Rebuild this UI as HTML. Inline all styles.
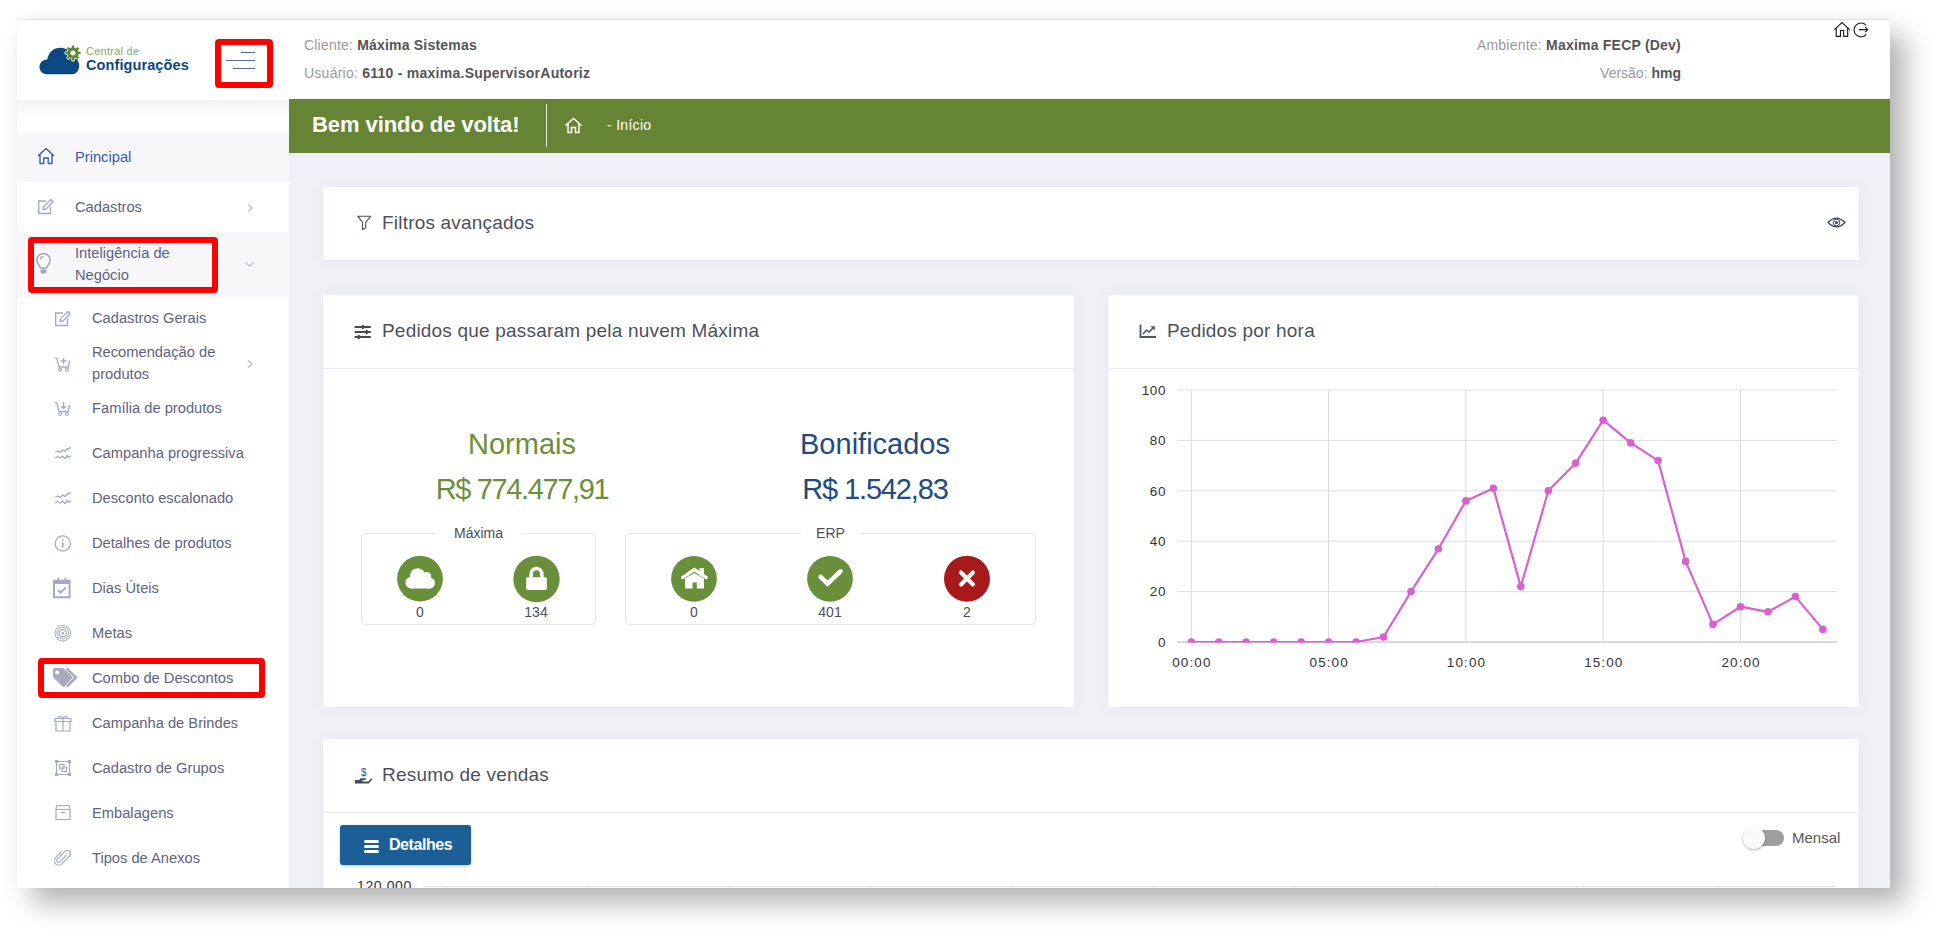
<!DOCTYPE html>
<html><head><meta charset="utf-8">
<style>
*{margin:0;padding:0;box-sizing:border-box}
html,body{width:1938px;height:936px;overflow:hidden;background:#fff;font-family:"Liberation Sans",sans-serif}
.a{position:absolute;white-space:nowrap}
#win{position:absolute;left:17px;top:20px;width:1873px;height:868px;background:#f0f1f7;box-shadow:15px 15px 26px rgba(0,0,0,.3),0 -1px 1px rgba(0,0,0,.06),0 -6px 14px rgba(0,0,0,.025)}
#pg{position:absolute;left:0;top:0;width:1938px;height:936px;clip-path:inset(20px 48px 48px 17px)}
.hdr{position:absolute;left:17px;top:20px;width:1873px;height:79px;background:#fff}
.side{position:absolute;left:17px;top:99px;width:272px;height:789px;background:#fff}
.green{position:absolute;left:289px;top:99px;width:1601px;height:54px;background:#658535}
.card{position:absolute;background:#fff;box-shadow:0 0 14px rgba(60,70,110,.055)}
.lbl{color:#9a9a9a}
.val{color:#555;font-weight:bold}
.si{position:absolute;white-space:nowrap;color:#5f6380;font-size:14.7px;line-height:22px}
.ic{position:absolute}
</style></head><body>
<div id="win"></div>
<div id="pg">
  <div class="hdr"></div>
  <div class="side"></div>
  <div class="green"></div>

  <!-- logo -->
  <svg class="ic" style="left:38px;top:46px" width="44" height="30" viewBox="0 0 44 30">
    <path d="M9.5 28.3 C4.5 28.3 1.5 25 1.5 21 C1.5 16.5 5 13.5 9.2 13.5 C10.5 6.5 15.5 1.8 22.5 1.8 C28.5 1.8 33 5.5 34.5 10.5 C38.5 11.5 41.2 15.2 41.2 20 C41.2 24.8 37.8 28.3 33.5 28.3 Z" fill="#0b4780"/>
  </svg>
  <svg class="ic" style="left:64px;top:44px" width="18" height="18" viewBox="0 0 18 18">
    <g fill="#fff"><circle cx="9" cy="9" r="6.4"/>
    <rect x="7.2" y="0.6" width="3.6" height="16.8" rx="1"/>
    <rect x="7.2" y="0.6" width="3.6" height="16.8" rx="1" transform="rotate(45 9 9)"/>
    <rect x="7.2" y="0.6" width="3.6" height="16.8" rx="1" transform="rotate(90 9 9)"/>
    <rect x="7.2" y="0.6" width="3.6" height="16.8" rx="1" transform="rotate(135 9 9)"/></g>
    <g fill="#5f8a35"><circle cx="9" cy="9" r="5.6"/>
    <rect x="7.75" y="1.4" width="2.5" height="15.2" rx="0.6"/>
    <rect x="7.75" y="1.4" width="2.5" height="15.2" rx="0.6" transform="rotate(45 9 9)"/>
    <rect x="7.75" y="1.4" width="2.5" height="15.2" rx="0.6" transform="rotate(90 9 9)"/>
    <rect x="7.75" y="1.4" width="2.5" height="15.2" rx="0.6" transform="rotate(135 9 9)"/></g>
    <circle cx="9" cy="9" r="2.5" fill="#fff"/>
  </svg>
  <div class="a" style="left:86px;top:45px;font-size:11px;color:#87a766;letter-spacing:0.25px">Central de</div>
  <div class="a" style="left:86px;top:57px;font-size:14.5px;font-weight:bold;color:#0b4780;letter-spacing:0.1px">Configurações</div>

  <!-- hamburger w/ red box -->
  <div class="a" style="left:214.6px;top:39.3px;width:58.8px;height:49.2px;border:6px solid #ff0000;border-radius:4px"></div>
  <div class="a" style="left:241px;top:52px;width:14px;height:1.2px;background:#5b6e8c"></div>
  <div class="a" style="left:226px;top:60px;width:29px;height:1.2px;background:#5b6e8c"></div>
  <div class="a" style="left:233px;top:68px;width:22px;height:1.2px;background:#5b6e8c"></div>

  <!-- header info -->
  <div class="a" style="left:304px;top:36px;font-size:14px;line-height:18px;letter-spacing:0.2px"><span class="lbl">Cliente:</span> <span class="val">Máxima Sistemas</span></div>
  <div class="a" style="left:304px;top:64px;font-size:14px;line-height:18px;letter-spacing:0.25px"><span class="lbl">Usuário:</span> <span class="val">6110 - maxima.SupervisorAutoriz</span></div>
  <div class="a" style="right:257px;top:36px;font-size:14px;line-height:18px;text-align:right;letter-spacing:0.22px"><span class="lbl">Ambiente:</span> <span class="val">Maxima FECP (Dev)</span></div>
  <div class="a" style="right:257px;top:64px;font-size:14px;line-height:18px;text-align:right"><span class="lbl">Versão:</span> <span class="val">hmg</span></div>
  <svg class="ic" style="left:1833px;top:22px" width="36" height="16" viewBox="0 0 36 16">
    <path d="M1.3 7.6 L9 0.6 L16.7 7.6 M3.2 6.2 V14.3 H7.5 V8.5 H10.6 V14.3 H14.7 V6.2" fill="none" stroke="#1e1e1e" stroke-width="1.15"/>
    <path d="M33.3 3.5 A6.9 6.9 0 1 0 33.3 12.3" fill="none" stroke="#1e1e1e" stroke-width="1.15"/>
    <path d="M25.9 7.6 H34.6 M32.3 5.2 L34.7 7.6 L32.3 10" fill="none" stroke="#1e1e1e" stroke-width="1.15"/>
  </svg>

  <!-- green bar -->
  <div class="a" style="left:312px;top:110px;font-size:22px;line-height:30px;color:#fff;font-weight:bold;letter-spacing:-0.08px">Bem vindo de volta!</div>
  <div class="a" style="left:546px;top:104px;width:1px;height:43px;background:#e8eedd"></div>
  <svg class="ic" style="left:564px;top:117px" width="19" height="17" viewBox="0 0 19 17">
    <path d="M1.5 8.5 L9.5 1.5 L17.5 8.5 M4 6.8 V15.5 H7.5 V10.5 H11.5 V15.5 H15 V6.8" fill="none" stroke="#fff" stroke-width="1.5"/>
  </svg>
  <div class="a" style="left:607px;top:116px;font-size:14px;line-height:18px;color:#fff;letter-spacing:0.3px">- Início</div>

  <!-- sidebar -->
  <div class="a" style="left:17px;top:100px;width:272px;height:20px;background:linear-gradient(#f3f3f3,#fff)"></div>
  <div class="a" style="left:17px;top:133px;width:272px;height:49px;background:#f7f7fa"></div>
  <div class="a" style="left:17px;top:232px;width:272px;height:65px;background:#f7f7fa"></div>

  <!-- sidebar items -->
  <svg class="ic" style="left:36px;top:147px" width="20" height="18" viewBox="0 0 20 18">
    <path d="M2 9 L10 1.5 L18 9 M4 7.3 V16.5 H7.8 V11 H12.2 V16.5 H16 V7.3" fill="none" stroke="#3a5ab6" stroke-width="1.4" stroke-linejoin="round"/>
  </svg>
  <div class="si" style="left:75px;top:146px;color:#3a5ab6">Principal</div>

  <svg class="ic" style="left:37px;top:198px" width="18" height="17" viewBox="0 0 18 17">
    <path d="M9 3 H1.7 V15.5 H13.5 V8.5" fill="none" stroke="#a6aac0" stroke-width="1.4"/>
    <path d="M6 11.5 L6.6 8.6 L13.8 1.4 L16.2 3.8 L9 11 Z" fill="none" stroke="#a6aac0" stroke-width="1.3" stroke-linejoin="round"/>
  </svg>
  <div class="si" style="left:75px;top:196px">Cadastros</div>
  <svg class="ic" style="left:246px;top:203px" width="8" height="10" viewBox="0 0 8 10"><path d="M2 1.5 L6 5 L2 8.5" fill="none" stroke="#b5b8c8" stroke-width="1.1"/></svg>

  <svg class="ic" style="left:35px;top:253px" width="17" height="22" viewBox="0 0 17 22">
    <path d="M5.3 15 C5 12.5 1.8 10.8 1.8 7.3 A6.7 6.7 0 0 1 15.2 7.3 C15.2 10.8 12 12.5 11.7 15 Z" fill="none" stroke="#a1a5bb" stroke-width="1.5" stroke-linejoin="round"/>
    <path d="M5.4 6.5 A3.2 3.2 0 0 1 8.5 3.6" fill="none" stroke="#a1a5bb" stroke-width="1.2"/>
    <path d="M5.5 16.6 H11.5 V18.5 Q11.5 20.5 9.5 20.5 H7.5 Q5.5 20.5 5.5 18.5 Z" fill="#a1a5bb"/>
  </svg>
  <div class="si" style="left:75px;top:242px">Inteligência de</div>
  <div class="si" style="left:75px;top:264px">Negócio</div>
  <svg class="ic" style="left:244px;top:260px" width="11" height="8" viewBox="0 0 11 8"><path d="M1.5 2.5 L5.5 6 L9.5 2.5" fill="none" stroke="#b5b8c8" stroke-width="1.1"/></svg>

  <svg class="ic" style="left:54px;top:310px" width="18" height="17" viewBox="0 0 18 17">
    <path d="M9 3 H1.7 V15.5 H13.5 V8.5" fill="none" stroke="#a6aac0" stroke-width="1.4"/>
    <path d="M6 11.5 L6.6 8.6 L13.8 1.4 L16.2 3.8 L9 11 Z" fill="none" stroke="#a6aac0" stroke-width="1.3" stroke-linejoin="round"/>
  </svg>
  <div class="si" style="left:92px;top:307px">Cadastros Gerais</div>

  <svg class="ic" style="left:54px;top:357px" width="17" height="15" viewBox="0 0 17 15">
    <path d="M0.8 1.2 H2.8 L5 10 H14.2 L15.6 3.5" fill="none" stroke="#a6aac0" stroke-width="1.3" stroke-linejoin="round"/>
    <circle cx="6.2" cy="12.6" r="1.5" fill="none" stroke="#a6aac0" stroke-width="1.2"/>
    <circle cx="13" cy="12.6" r="1.5" fill="none" stroke="#a6aac0" stroke-width="1.2"/>
    <path d="M9.6 1 V7 M6.6 4 H12.6" fill="none" stroke="#a6aac0" stroke-width="1.3"/>
  </svg>
  <div class="si" style="left:92px;top:341px">Recomendação de</div>
  <div class="si" style="left:92px;top:363px">produtos</div>
  <svg class="ic" style="left:246px;top:359px" width="8" height="10" viewBox="0 0 8 10"><path d="M2 1.5 L6 5 L2 8.5" fill="none" stroke="#b5b8c8" stroke-width="1.1"/></svg>

  <svg class="ic" style="left:54px;top:401px" width="17" height="16" viewBox="0 0 17 16">
    <path d="M0.8 1.6 H2.8 L5 10.5 H14.2 L15.6 4" fill="none" stroke="#a6aac0" stroke-width="1.3" stroke-linejoin="round"/>
    <circle cx="6.2" cy="13" r="1.5" fill="none" stroke="#a6aac0" stroke-width="1.2"/>
    <circle cx="13" cy="13" r="1.5" fill="none" stroke="#a6aac0" stroke-width="1.2"/>
    <path d="M9.6 1 V7.5 M7.3 5.2 L9.6 7.5 L11.9 5.2" fill="none" stroke="#a6aac0" stroke-width="1.3"/>
  </svg>
  <div class="si" style="left:92px;top:397px">Família de produtos</div>

  <svg class="ic" style="left:54px;top:446px" width="18" height="16" viewBox="0 0 18 16">
    <path d="M1.2 6 L4 5 L6 6.5 L9 4 L11 5.5 L13.5 2.5 L14.5 3.2 L16.8 1.2 M1.2 12 L3.5 10.5 L6 12 L8.5 10 L11 12.5 L13.5 9.5 L14.6 11.5 L16.8 10" fill="none" stroke="#a6aac0" stroke-width="1.3" stroke-linejoin="round"/>
  </svg>
  <div class="si" style="left:92px;top:442px">Campanha progressiva</div>

  <svg class="ic" style="left:54px;top:491px" width="18" height="16" viewBox="0 0 18 16">
    <path d="M1.2 6 L4 5 L6 6.5 L9 4 L11 5.5 L13.5 2.5 L14.5 3.2 L16.8 1.2 M1.2 12 L3.5 10.5 L6 12 L8.5 10 L11 12.5 L13.5 9.5 L14.6 11.5 L16.8 10" fill="none" stroke="#a6aac0" stroke-width="1.3" stroke-linejoin="round"/>
  </svg>
  <div class="si" style="left:92px;top:487px">Desconto escalonado</div>

  <svg class="ic" style="left:54px;top:535px" width="18" height="18" viewBox="0 0 18 18">
    <circle cx="8.8" cy="8.5" r="7.6" fill="none" stroke="#a6aac0" stroke-width="1.3"/>
    <path d="M8.8 7.2 V12.6" stroke="#a6aac0" stroke-width="1.6"/><circle cx="8.8" cy="4.9" r="0.95" fill="#a6aac0"/>
  </svg>
  <div class="si" style="left:92px;top:532px">Detalhes de produtos</div>

  <svg class="ic" style="left:52px;top:577px" width="20" height="22" viewBox="0 0 20 22">
    <path d="M2 3.8 H17.6 V20.2 H2 Z" fill="none" stroke="#a6aac0" stroke-width="2"/>
    <rect x="2" y="3.4" width="15.6" height="3.6" fill="#a6aac0"/>
    <rect x="5.2" y="1" width="2" height="3" fill="#a6aac0"/><rect x="12.4" y="1" width="2" height="3" fill="#a6aac0"/>
    <path d="M6 13 L8.6 15.6 L13.8 10.4" fill="none" stroke="#a6aac0" stroke-width="2"/>
  </svg>
  <div class="si" style="left:92px;top:577px">Dias Úteis</div>

  <svg class="ic" style="left:54px;top:624px" width="18" height="18" viewBox="0 0 18 18">
    <circle cx="8.8" cy="9.2" r="7.8" fill="none" stroke="#a6aac0" stroke-width="1"/>
    <circle cx="8.8" cy="9.2" r="5.8" fill="none" stroke="#a6aac0" stroke-width="1"/>
    <circle cx="8.8" cy="9.2" r="3.6" fill="none" stroke="#a6aac0" stroke-width="1.3"/>
    <circle cx="8.8" cy="9.2" r="1.3" fill="#a6aac0"/>
  </svg>
  <div class="si" style="left:92px;top:622px">Metas</div>

  <svg class="ic" style="left:52px;top:667px" width="27" height="23" viewBox="0 0 27 23">
    <path d="M1 3 Q1 1 3 1 H10.5 Q11.5 1 12.5 2 L20 9.5 Q21 10.5 20 11.5 L12.5 19.5 Q11.5 20.5 10.5 19.5 L2 11 Q1 10 1 9 Z" fill="#a8abbd"/>
    <circle cx="5.2" cy="5.5" r="1.9" fill="#fff"/>
    <path d="M14.5 1.3 L23.8 10.5 L14.8 19.6" fill="none" stroke="#a8abbd" stroke-width="2.6" stroke-linejoin="round"/>
  </svg>
  <div class="si" style="left:92px;top:667px">Combo de Descontos</div>

  <svg class="ic" style="left:54px;top:714px" width="18" height="18" viewBox="0 0 18 18">
    <path d="M2 7.5 H16 V17 H2 Z M1 4.5 H17 V7.5 H1 Z M9 4.5 V17" fill="none" stroke="#a6aac0" stroke-width="1.2"/>
    <path d="M9 4.5 C7 1 4.2 1.5 5 3.5 C5.5 4.5 9 4.5 9 4.5 C11 1 13.8 1.5 13 3.5 C12.5 4.5 9 4.5 9 4.5" fill="none" stroke="#a6aac0" stroke-width="1.1"/>
  </svg>
  <div class="si" style="left:92px;top:712px">Campanha de Brindes</div>

  <svg class="ic" style="left:54px;top:759px" width="18" height="18" viewBox="0 0 18 18">
    <path d="M2.5 2.5 H15.5 V15.5 H2.5 Z" fill="none" stroke="#a6aac0" stroke-width="1.2"/>
    <rect x="1" y="1" width="3" height="3" fill="#a6aac0"/><rect x="14" y="1" width="3" height="3" fill="#a6aac0"/>
    <rect x="1" y="14" width="3" height="3" fill="#a6aac0"/><rect x="14" y="14" width="3" height="3" fill="#a6aac0"/>
    <path d="M5.5 5.5 H10 V10 H5.5 Z M8 8 H12.5 V12.5 H8 Z" fill="none" stroke="#a6aac0" stroke-width="1.1"/>
  </svg>
  <div class="si" style="left:92px;top:757px">Cadastro de Grupos</div>

  <svg class="ic" style="left:54px;top:804px" width="18" height="17" viewBox="0 0 18 17">
    <path d="M2 5.5 H16 V15.5 H2 Z M2.8 1.5 H15.2 L16 5.5 H2 Z" fill="none" stroke="#a6aac0" stroke-width="1.2" stroke-linejoin="round"/>
    <path d="M6.8 8.5 H11.2" stroke="#a6aac0" stroke-width="1.3"/>
  </svg>
  <div class="si" style="left:92px;top:802px">Embalagens</div>

  <svg class="ic" style="left:54px;top:849px" width="18" height="18" viewBox="0 0 18 18">
    <path d="M12.5 6 L6 12.8 A1.9 1.9 0 0 1 3.3 10.1 L11 2.3 A3.2 3.2 0 0 1 15.6 6.8 L7.8 14.8 A4.4 4.4 0 0 1 1.5 8.6 L7.6 2.3" fill="none" stroke="#a6aac0" stroke-width="1.2"/>
  </svg>
  <div class="si" style="left:92px;top:847px">Tipos de Anexos</div>


  <!-- cards -->
  <div class="card" style="left:323px;top:187px;width:1536px;height:75px;border-bottom:2px solid #e9ebf1"></div>
  <svg class="ic" style="left:357px;top:214px" width="14" height="16" viewBox="0 0 14 16">
    <path d="M0.9 2.2 H13.8 L8.7 8.4 V13.6 L5.5 15.5 V8.4 Z" fill="none" stroke="#4a505c" stroke-width="1.1" stroke-linejoin="miter"/>
  </svg>
  <div class="a" style="left:382px;top:211px;font-size:19px;line-height:24px;color:#4b515c;letter-spacing:0.2px">Filtros avançados</div>
  <svg class="ic" style="left:1827px;top:216px" width="19" height="13" viewBox="0 0 19 13">
    <path d="M1 6.5 Q9.5 -2.3 18 6.5 Q9.5 15.3 1 6.5 Z" fill="none" stroke="#3a4150" stroke-width="1.1"/>
    <circle cx="9.5" cy="6.5" r="3.3" fill="none" stroke="#3a4150" stroke-width="1"/><circle cx="9.5" cy="6.5" r="1.6" fill="#3a4150"/>
  </svg>

  <div class="card" style="left:323px;top:295px;width:751px;height:412px"></div>
  <div class="a" style="left:323px;top:368px;width:751px;height:1px;background:#e8eaf0"></div>
  <svg class="ic" style="left:354px;top:324px" width="18" height="16" viewBox="0 0 18 16">
    <path d="M0.6 3 H16.8 M0.6 8 H16.8 M0.6 13 H16.8" stroke="#454a55" stroke-width="1.9"/>
    <path d="M8.8 0.9 V5.1 M12.8 5.9 V10.1 M4.8 10.9 V15.1" stroke="#454a55" stroke-width="2"/>
  </svg>
  <div class="a" style="left:382px;top:319px;font-size:19px;line-height:24px;color:#4b515c;letter-spacing:0.2px">Pedidos que passaram pela nuvem Máxima</div>

  <div class="a" style="left:322px;top:426px;width:400px;text-align:center;font-size:29px;line-height:36px;color:#6a8f3b">Normais</div>
  <div class="a" style="left:322px;top:471px;width:400px;text-align:center;font-size:29px;line-height:36px;color:#6a8f3b;letter-spacing:-1.35px">R$ 774.477,91</div>
  <div class="a" style="left:675px;top:426px;width:400px;text-align:center;font-size:29px;line-height:36px;color:#1f4b80">Bonificados</div>
  <div class="a" style="left:675px;top:471px;width:400px;text-align:center;font-size:29px;line-height:36px;color:#1f4b80;letter-spacing:-1.15px">R$ 1.542,83</div>

  <div class="a" style="left:361px;top:533px;width:235px;height:92px;border:1px solid #e6e8ee;border-radius:5px"></div>
  <div class="a" style="left:436px;top:525px;width:85px;height:16px;background:#fff;text-align:center;font-size:14px;line-height:16px;color:#4a4f5c">Máxima</div>
  <div class="a" style="left:625px;top:533px;width:411px;height:92px;border:1px solid #e6e8ee;border-radius:5px"></div>
  <div class="a" style="left:801px;top:525px;width:59px;height:16px;background:#fff;text-align:center;font-size:14px;line-height:16px;color:#4a4f5c">ERP</div>

  <svg class="ic" style="left:396px;top:555px" width="48" height="48" viewBox="0 0 48 48">
    <circle cx="24" cy="23.7" r="22.9" fill="#6a8f3b"/>
    <g fill="#fff"><circle cx="15.2" cy="27.6" r="5.8"/><circle cx="21.6" cy="20.6" r="7.4"/><circle cx="30.6" cy="21.6" r="4.6"/><circle cx="33.5" cy="28" r="5.5"/>
    <rect x="15" y="24" width="18.5" height="9.5"/></g>
  </svg>
  <svg class="ic" style="left:512px;top:555px" width="48" height="48" viewBox="0 0 48 48">
    <circle cx="24.5" cy="24" r="23.2" fill="#6a8f3b"/>
    <path d="M19.2 23 V18.8 A5.3 5.3 0 0 1 29.8 18.8 V23" fill="none" stroke="#fff" stroke-width="3.7"/>
    <rect x="14.2" y="22.3" width="20.6" height="12.6" rx="1.4" fill="#fff"/>
  </svg>
  <div class="a" style="left:380px;top:603px;width:80px;text-align:center;font-size:14px;line-height:18px;color:#4a4f5c">0</div>
  <div class="a" style="left:496px;top:603px;width:80px;text-align:center;font-size:14px;line-height:18px;color:#4a4f5c">134</div>

  <svg class="ic" style="left:670px;top:555px" width="48" height="48" viewBox="0 0 48 48">
    <circle cx="24" cy="23.8" r="22.9" fill="#6a8f3b"/>
    <rect x="29.4" y="13.2" width="4.6" height="8" fill="#fff"/>
    <path d="M12.6 22.6 L24.4 14.6 L36.4 22.6" fill="none" stroke="#fff" stroke-width="3.3" stroke-linecap="round" stroke-linejoin="miter"/>
    <path d="M15 33.5 V23.6 L24.4 17.9 L34 23.6 V33.5 H26.8 V27.6 H22.5 V33.5 Z" fill="#fff"/>
  </svg>
  <svg class="ic" style="left:806px;top:555px" width="48" height="48" viewBox="0 0 48 48">
    <circle cx="24" cy="23.8" r="22.9" fill="#6a8f3b"/>
    <path d="M14.6 22 L21.6 28.6 L34.5 16.4" fill="none" stroke="#fff" stroke-width="4.5" stroke-linecap="round" stroke-linejoin="miter"/>
  </svg>
  <svg class="ic" style="left:943px;top:555px" width="48" height="48" viewBox="0 0 48 48">
    <circle cx="24" cy="23.8" r="23" fill="#a81a1a"/>
    <path d="M18 17.6 L30 29.4 M30 17.6 L18 29.4" fill="none" stroke="#fff" stroke-width="4.2" stroke-linecap="round"/>
  </svg>
  <div class="a" style="left:654px;top:603px;width:80px;text-align:center;font-size:14px;line-height:18px;color:#4a4f5c">0</div>
  <div class="a" style="left:790px;top:603px;width:80px;text-align:center;font-size:14px;line-height:18px;color:#4a4f5c">401</div>
  <div class="a" style="left:927px;top:603px;width:80px;text-align:center;font-size:14px;line-height:18px;color:#4a4f5c">2</div>

  <div class="card" style="left:1108px;top:295px;width:751px;height:412px"></div>
  <div class="a" style="left:1108px;top:368px;width:751px;height:1px;background:#e8eaf0"></div>
  <svg class="ic" style="left:1139px;top:323.2px" width="18" height="16" viewBox="0 0 18 16">
    <path d="M1.5 1.5 V14 H17" fill="none" stroke="#4f5562" stroke-width="1.8"/>
    <path d="M4 11 L7.5 7 L10 9 L14.5 4.5" fill="none" stroke="#4f5562" stroke-width="1.6"/>
    <path d="M11.5 3.2 H15.8 V7.5 Z" fill="#4f5562"/>
  </svg>
  <div class="a" style="left:1167px;top:319px;font-size:19px;line-height:24px;color:#4b515c;letter-spacing:0.2px">Pedidos por hora</div>
  <svg class="ic" style="left:0;top:0" width="1938" height="936" viewBox="0 0 1938 936" font-family="Liberation Sans"><defs><clipPath id="ca"><rect x="1170" y="380" width="680" height="262.5"/></clipPath></defs><line x1="1177" y1="642.0" x2="1837" y2="642.0" stroke="#dedede" stroke-width="1"/><text x="1166" y="646.8" text-anchor="end" font-size="13.5" letter-spacing="0.6" fill="#333">0</text><line x1="1177" y1="591.6" x2="1837" y2="591.6" stroke="#dedede" stroke-width="1"/><text x="1166" y="596.4" text-anchor="end" font-size="13.5" letter-spacing="0.6" fill="#333">20</text><line x1="1177" y1="541.2" x2="1837" y2="541.2" stroke="#dedede" stroke-width="1"/><text x="1166" y="546.0" text-anchor="end" font-size="13.5" letter-spacing="0.6" fill="#333">40</text><line x1="1177" y1="490.8" x2="1837" y2="490.8" stroke="#dedede" stroke-width="1"/><text x="1166" y="495.6" text-anchor="end" font-size="13.5" letter-spacing="0.6" fill="#333">60</text><line x1="1177" y1="440.4" x2="1837" y2="440.4" stroke="#dedede" stroke-width="1"/><text x="1166" y="445.2" text-anchor="end" font-size="13.5" letter-spacing="0.6" fill="#333">80</text><line x1="1177" y1="390.0" x2="1837" y2="390.0" stroke="#dedede" stroke-width="1"/><text x="1166" y="394.8" text-anchor="end" font-size="13.5" letter-spacing="0.6" fill="#333">100</text><line x1="1191.3" y1="390" x2="1191.3" y2="642" stroke="#dadada" stroke-width="1"/><text x="1191.9" y="667" text-anchor="middle" font-size="13.5" letter-spacing="1.1" fill="#333">00:00</text><line x1="1328.6" y1="390" x2="1328.6" y2="642" stroke="#dadada" stroke-width="1"/><text x="1329.2" y="667" text-anchor="middle" font-size="13.5" letter-spacing="1.1" fill="#333">05:00</text><line x1="1465.9" y1="390" x2="1465.9" y2="642" stroke="#dadada" stroke-width="1"/><text x="1466.5" y="667" text-anchor="middle" font-size="13.5" letter-spacing="1.1" fill="#333">10:00</text><line x1="1603.2" y1="390" x2="1603.2" y2="642" stroke="#dadada" stroke-width="1"/><text x="1603.8" y="667" text-anchor="middle" font-size="13.5" letter-spacing="1.1" fill="#333">15:00</text><line x1="1740.5" y1="390" x2="1740.5" y2="642" stroke="#dadada" stroke-width="1"/><text x="1741.1" y="667" text-anchor="middle" font-size="13.5" letter-spacing="1.1" fill="#333">20:00</text><line x1="1177" y1="642" x2="1837" y2="642" stroke="#c4c4c4" stroke-width="1"/><g clip-path="url(#ca)"><polyline points="1191.3,642.0 1218.8,642.0 1246.2,642.0 1273.7,642.0 1301.1,642.0 1328.6,642.0 1356.1,642.0 1383.5,637.0 1411.0,591.6 1438.4,548.8 1465.9,500.9 1493.4,488.3 1520.8,586.6 1548.3,490.8 1575.7,463.1 1603.2,420.2 1630.7,442.9 1658.1,460.6 1685.6,561.4 1713.0,624.4 1740.5,606.7 1768.0,611.8 1795.4,596.6 1822.9,629.4" fill="none" stroke="#da60d2" stroke-width="2.2" stroke-linejoin="round"/><circle cx="1191.3" cy="642.0" r="3.8" fill="#da60d2"/><circle cx="1218.8" cy="642.0" r="3.8" fill="#da60d2"/><circle cx="1246.2" cy="642.0" r="3.8" fill="#da60d2"/><circle cx="1273.7" cy="642.0" r="3.8" fill="#da60d2"/><circle cx="1301.1" cy="642.0" r="3.8" fill="#da60d2"/><circle cx="1328.6" cy="642.0" r="3.8" fill="#da60d2"/><circle cx="1356.1" cy="642.0" r="3.8" fill="#da60d2"/><circle cx="1383.5" cy="637.0" r="3.8" fill="#da60d2"/><circle cx="1411.0" cy="591.6" r="3.8" fill="#da60d2"/><circle cx="1438.4" cy="548.8" r="3.8" fill="#da60d2"/><circle cx="1465.9" cy="500.9" r="3.8" fill="#da60d2"/><circle cx="1493.4" cy="488.3" r="3.8" fill="#da60d2"/><circle cx="1520.8" cy="586.6" r="3.8" fill="#da60d2"/><circle cx="1548.3" cy="490.8" r="3.8" fill="#da60d2"/><circle cx="1575.7" cy="463.1" r="3.8" fill="#da60d2"/><circle cx="1603.2" cy="420.2" r="3.8" fill="#da60d2"/><circle cx="1630.7" cy="442.9" r="3.8" fill="#da60d2"/><circle cx="1658.1" cy="460.6" r="3.8" fill="#da60d2"/><circle cx="1685.6" cy="561.4" r="3.8" fill="#da60d2"/><circle cx="1713.0" cy="624.4" r="3.8" fill="#da60d2"/><circle cx="1740.5" cy="606.7" r="3.8" fill="#da60d2"/><circle cx="1768.0" cy="611.8" r="3.8" fill="#da60d2"/><circle cx="1795.4" cy="596.6" r="3.8" fill="#da60d2"/><circle cx="1822.9" cy="629.4" r="3.8" fill="#da60d2"/></g></svg>

  <div class="card" style="left:323px;top:739px;width:1536px;height:160px"></div>
  <div class="a" style="left:323px;top:812px;width:1536px;height:1px;background:#e8eaf0"></div>
  <svg class="ic" style="left:354px;top:766px" width="18" height="19" viewBox="0 0 18 19">
    <text x="9.7" y="10" font-size="10" text-anchor="middle" fill="#454a55">$</text>
    <path d="M0.9 14 H5 L6.8 12.2 H11.8 V14 H8.5 V15.4 H14.4 L17.2 12.3 L18.3 13.3 L14.6 17.6 H0.9 Z" fill="#454a55"/>
  </svg>
  <div class="a" style="left:382px;top:763px;font-size:19px;line-height:24px;color:#4b515c;letter-spacing:0.2px">Resumo de vendas</div>

  <div class="a" style="left:340px;top:825px;width:131px;height:40px;background:#1b5f96;border-radius:3px;box-shadow:0 1px 3px rgba(0,0,0,.25)"></div>
  <div class="a" style="left:364px;top:840px;width:15px;height:3px;background:#fff;border-radius:1.5px"></div>
  <div class="a" style="left:364px;top:845px;width:15px;height:3px;background:#fff;border-radius:1.5px"></div>
  <div class="a" style="left:364px;top:850px;width:15px;height:3px;background:#fff;border-radius:1.5px"></div>
  <div class="a" style="left:389px;top:835px;font-size:16px;line-height:20px;color:#fff;font-weight:bold;letter-spacing:-0.45px">Detalhes</div>

  <div class="a" style="left:1750px;top:830px;width:34px;height:16px;background:#9e9e9e;border-radius:8px"></div>
  <div class="a" style="left:1743px;top:827px;width:22px;height:22px;background:#fafafa;border-radius:50%;box-shadow:0 1px 3px rgba(0,0,0,.3)"></div>
  <div class="a" style="left:1792px;top:829px;font-size:15px;line-height:18px;color:#555">Mensal</div>

  <div class="a" style="left:357px;top:877px;font-size:14px;line-height:18px;color:#333;letter-spacing:0.6px">120.000</div>
  <div class="a" style="left:446.0px;top:886px;width:1px;height:3px;background:#e0e0e0"></div><div class="a" style="left:587.3px;top:886px;width:1px;height:3px;background:#e0e0e0"></div><div class="a" style="left:728.6px;top:886px;width:1px;height:3px;background:#e0e0e0"></div><div class="a" style="left:869.9px;top:886px;width:1px;height:3px;background:#e0e0e0"></div><div class="a" style="left:1011.2px;top:886px;width:1px;height:3px;background:#e0e0e0"></div><div class="a" style="left:1152.5px;top:886px;width:1px;height:3px;background:#e0e0e0"></div><div class="a" style="left:1293.8px;top:886px;width:1px;height:3px;background:#e0e0e0"></div><div class="a" style="left:1435.1px;top:886px;width:1px;height:3px;background:#e0e0e0"></div><div class="a" style="left:1576.4px;top:886px;width:1px;height:3px;background:#e0e0e0"></div><div class="a" style="left:1717.7px;top:886px;width:1px;height:3px;background:#e0e0e0"></div>
  <div class="a" style="left:423px;top:886px;width:1413px;height:1px;background:#e0e0e0"></div>

  <!-- red highlight boxes -->
  <div class="a" style="left:27.5px;top:236.5px;width:190px;height:56px;border:6px solid #ff0000;border-radius:4px"></div>
  <div class="a" style="left:37.5px;top:658.3px;width:227px;height:40px;border:6px solid #ff0000;border-radius:4px"></div>
</div>
</body></html>
